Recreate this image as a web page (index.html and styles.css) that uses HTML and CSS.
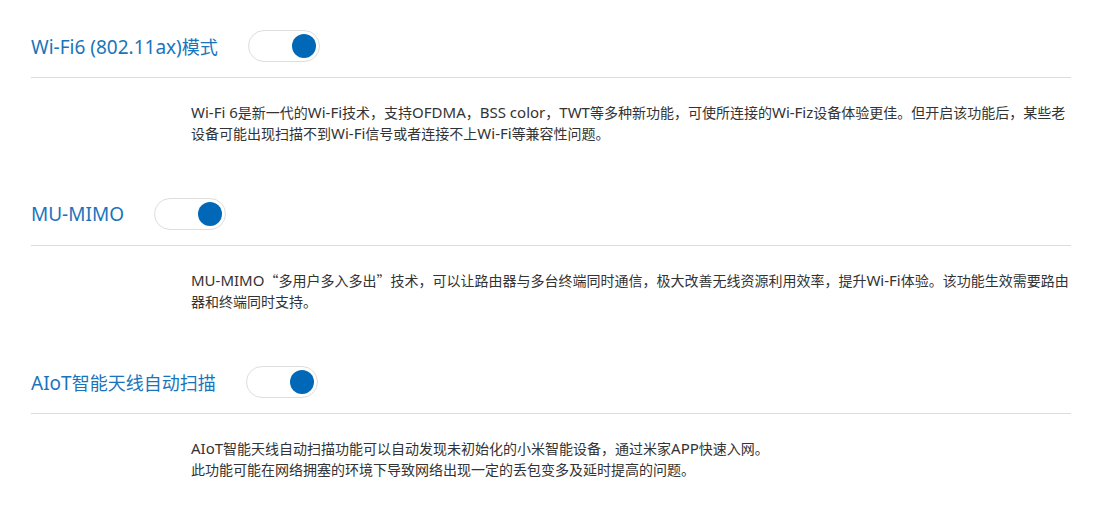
FILE: index.html
```html
<!DOCTYPE html>
<html lang="zh-CN">
<head>
  <meta charset="utf-8">
  <title>Wi-Fi 设置</title>
  <link rel="stylesheet" href="styles.css">
</head>
<body>
  <div class="page">
    <div class="section">
      <div class="head">
        <span class="title"><span class="en">Wi-Fi6 (802.11ax)</span>模式</span>
        <span class="switch on"><i class="knob"></i></span>
      </div>
      <div class="desc">
        <span class="en">Wi-Fi 6</span>是新一代的<span class="en">Wi-Fi</span>技术，支持<span class="en">OFDMA</span>，<span class="en">BSS color</span>，<span class="en">TWT</span>等多种新功能，可使所连接的<span class="en">Wi-Fiz</span>设备体验更佳。但开启该功能后，某些老设备可能出现扫描不到<span class="en">Wi-Fi</span>信号或者连接不上<span class="en">Wi-Fi</span>等兼容性问题。
      </div>
    </div>
    <div class="section">
      <div class="head">
        <span class="title"><span class="en">MU-MIMO</span></span>
        <span class="switch on"><i class="knob"></i></span>
      </div>
      <div class="desc">
        <span class="en">MU-MIMO</span><span class="cjk">“</span>多用户多入多出<span class="cjk">”</span>技术，可以让路由器与多台终端同时通信，极大改善无线资源利用效率，提升<span class="en">Wi-Fi</span>体验。该功能生效需要路由器和终端同时支持。
      </div>
    </div>
    <div class="section">
      <div class="head">
        <span class="title"><span class="en">AIoT</span>智能天线自动扫描</span>
        <span class="switch on"><i class="knob"></i></span>
      </div>
      <div class="desc">
        <span class="en">AIoT</span>智能天线自动扫描功能可以自动发现未初始化的小米智能设备，通过米家<span class="en">APP</span>快速入网。<br>
        此功能可能在网络拥塞的环境下导致网络出现一定的丢包变多及延时提高的问题。
      </div>
    </div>
  </div>
</body>
</html>
```

FILE: styles.css
```css
html,
body {
  margin: 0;
  padding: 0;
  background: #fff;
}
body {
  font-family: "Noto Sans", "Noto Sans CJK SC", sans-serif;
  color: #333;
}
.page {
  width: 1040px;
  padding: 30px 0 0 31px;
}
.section {
  margin-bottom: 54px;
}
.head {
  display: flex;
  align-items: center;
  padding-bottom: 15px;
  border-bottom: 1px solid #dcdcdc;
}
.title {
  font-size: 18px;
  color: #1a74bb;
  margin-right: 30px;
}
.title .en {
  font-size: 19px;
}
.switch {
  box-sizing: border-box;
  display: flex;
  align-items: center;
  justify-content: flex-end;
  width: 72px;
  height: 32px;
  padding: 0 3px;
  border: 1px solid #dedede;
  border-radius: 16px;
  background: #fff;
}
.knob {
  width: 24px;
  height: 24px;
  border-radius: 50%;
  background: #0068b7;
}
.desc {
  padding: 24px 0 0 160px;
  font-size: 14px;
  line-height: 21px;
}
.desc .en {
  font-size: 15px;
}
.cjk {
  font-family: "Noto Sans CJK SC", sans-serif;
}
```
